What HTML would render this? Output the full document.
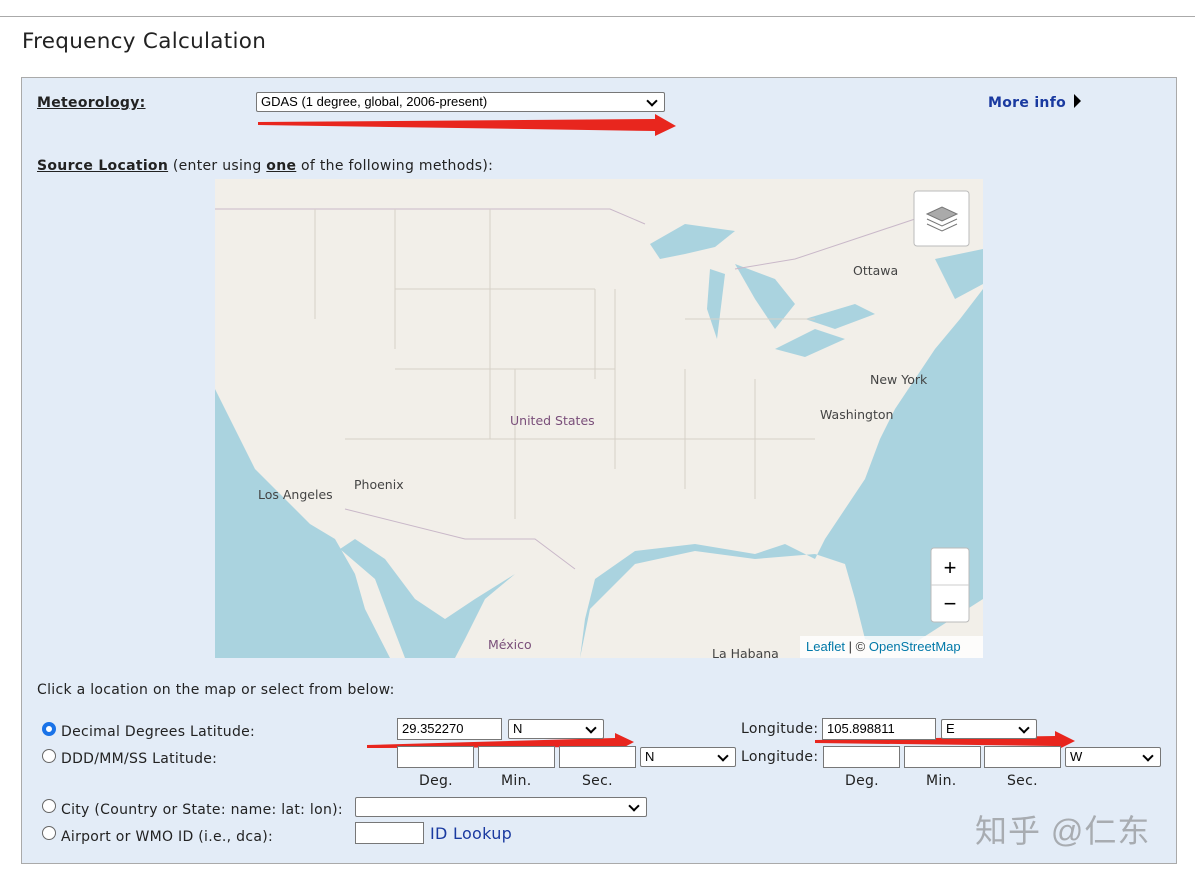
<!DOCTYPE html>
<html><head><meta charset="utf-8"><style>
*{box-sizing:border-box}
body{margin:0;width:1195px;height:876px;background:#fff;font-family:"DejaVu Sans","Liberation Sans",sans-serif;font-size:14px;color:#222;position:relative;overflow:hidden}
.a{position:absolute}
.inp{position:absolute;background:#fff;border:1px solid #777;height:22px;font-family:"Liberation Sans",sans-serif;font-size:13px;padding:2px 4px;color:#000}
.sel{position:absolute;background:#fff;border:1px solid #777;border-radius:2px;height:20px;font-family:"Liberation Sans",sans-serif;font-size:13px;padding:1px 4px;color:#000}
.sel:after{content:"";position:absolute;right:8px;top:4px;width:6px;height:6px;border-right:2px solid #000;border-bottom:2px solid #000;transform:rotate(45deg)}
.rad{position:absolute;width:14px;height:14px;border-radius:50%;border:1px solid #666;background:#fff}
.lab{position:absolute;font-size:14px;color:#222;white-space:nowrap;letter-spacing:0.3px}
</style></head><body>
<div class="a" style="left:0;top:16px;width:1195px;height:1px;background:#aaa"></div>
<div class="a" style="left:22px;top:29px;font-size:21.5px;color:#222;letter-spacing:0.3px">Frequency Calculation</div>
<div class="a" style="left:21px;top:77px;width:1156px;height:787px;background:#e3ecf7;border:1px solid #aaa"></div>
<div class="lab" style="left:37px;top:95px;font-weight:bold;text-decoration:underline">Meteorology:</div>
<div class="sel" style="left:256px;top:92px;width:409px;height:20px">GDAS (1 degree, global, 2006-present)</div>
<div class="lab" style="left:988px;top:95px;font-weight:bold;color:#1a3aa0">More info</div>
<div class="a" style="left:1074px;top:94px;width:0;height:0;border-left:7px solid #000;border-top:7px solid transparent;border-bottom:7px solid transparent"></div>
<svg class="a" style="left:0;top:0" width="1195" height="876"><polygon points="258,122 655,119 655,114 676,126 655,136 655,131 258,125" fill="#e8261e"/><polygon points="367,745 615,738 615,733 634,742 615,752 615,747 367,748" fill="#e8261e"/><polygon points="815,740 1055,736 1055,731 1075,741 1055,751 1055,746 815,743" fill="#e8261e"/></svg>
<div class="lab" style="left:37px;top:158px"><b style="text-decoration:underline">Source Location</b> (enter using <b style="text-decoration:underline">one</b> of the following methods):</div>
<svg class="a" style="left:215px;top:179px" width="768" height="479" viewBox="0 0 768 479">
<rect width="768" height="479" fill="#f2efe9"/>
<path d="M0,210 L20,250 L40,290 L70,320 L95,345 L120,360 L140,395 L150,430 L175,479 L0,479Z" fill="#aad3df"/>
<path d="M125,370 L160,400 L175,440 L190,479 L240,479 L250,460 L270,420 L300,395 L260,420 L230,440 L200,420 L170,380 L140,360Z" fill="#aad3df"/>
<path d="M365,479 L375,430 L420,385 L480,372 L540,380 L600,375 L630,385 L640,420 L650,460 L690,470 L768,420 L768,110 L745,140 L720,170 L700,200 L680,230 L665,260 L650,300 L630,330 L610,360 L600,380 L570,365 L540,375 L480,365 L420,372 L380,400 L370,440Z" fill="#aad3df"/>
<path d="M720,80 L768,70 L768,105 L740,120Z" fill="#aad3df"/>
<path d="M435,65 L470,45 L520,52 L500,68 L470,75 L445,80Z" fill="#aad3df"/>
<path d="M495,90 L510,95 L502,160 L492,130Z" fill="#aad3df"/>
<path d="M520,85 L560,100 L580,125 L560,150 L540,120Z" fill="#aad3df"/>
<path d="M560,170 L600,150 L630,160 L590,178Z" fill="#aad3df"/>
<path d="M590,140 L640,125 L660,135 L620,150Z" fill="#aad3df"/>
<g stroke="#c9b8c9" fill="none" stroke-width="1"><path d="M0,30 L395,30 L430,45"/><path d="M130,330 L250,360 L320,360 L360,390"/><path d="M520,90 L580,80 L640,60 L700,40"/></g>
<g stroke="#d6d0c8" fill="none" stroke-width="1"><path d="M100,30 V140 M180,30 V170 M275,30 V260 M180,110 H380 M180,190 H400 M130,260 H400 M300,190 V340 M400,110 V290 M470,190 V310 M540,200 V320 M380,110 V200 M400,260 H600 M470,140 H600"/></g>
<g font-family="DejaVu Sans,sans-serif" font-size="12.5" fill="#444"><text x="638" y="96">Ottawa</text><text x="655" y="205">New York</text><text x="605" y="240">Washington</text><text x="295" y="246" fill="#7a4f7a">United States</text><text x="139" y="310">Phoenix</text><text x="43" y="320">Los Angeles</text><text x="273" y="470" fill="#7a4f7a">México</text><text x="497" y="479">La Habana</text></g>
<rect x="699" y="12" width="55" height="55" rx="3" fill="#fff" stroke="#bbb"/>
<g fill="none" stroke="#777"><path d="M712,45 L727,52 L742,45"/><path d="M712,40 L727,47 L742,40"/><path d="M712,35 L727,28 L742,35 L727,42Z" fill="#aaa"/></g>
<rect x="716" y="369" width="38" height="74" rx="3" fill="#fff" stroke="#bbb"/><line x1="716" y1="406" x2="754" y2="406" stroke="#ccc"/>
<text x="735" y="396" text-anchor="middle" font-size="22" font-family="Liberation Sans" fill="#000">+</text><text x="735" y="432" text-anchor="middle" font-size="22" font-family="Liberation Sans" fill="#000">−</text>
<rect x="585" y="457" width="183" height="22" fill="rgba(255,255,255,.8)"/>
<text x="591" y="472" font-size="13" font-family="Liberation Sans" fill="#0078a8">Leaflet <tspan fill="#333">| ©</tspan> OpenStreetMap</text>
</svg>
<div class="lab" style="left:37px;top:682px">Click a location on the map or select from below:</div>
<div class="rad" style="left:42px;top:722px;border:4px solid #1a73e8"></div>
<div class="lab" style="left:61px;top:724px">Decimal Degrees Latitude:</div>
<div class="inp" style="left:397px;top:718px;width:105px">29.352270</div>
<div class="sel" style="left:508px;top:719px;width:96px">N</div>
<div class="lab" style="left:741px;top:721px">Longitude:</div>
<div class="inp" style="left:822px;top:718px;width:114px">105.898811</div>
<div class="sel" style="left:941px;top:719px;width:96px">E</div>
<div class="rad" style="left:42px;top:749px"></div>
<div class="lab" style="left:61px;top:751px">DDD/MM/SS Latitude:</div>
<div class="inp" style="left:397px;top:746px;width:77px"></div><div class="inp" style="left:478px;top:746px;width:77px"></div><div class="inp" style="left:559px;top:746px;width:77px"></div>
<div class="sel" style="left:640px;top:747px;width:96px">N</div>
<div class="lab" style="left:741px;top:749px">Longitude:</div>
<div class="inp" style="left:823px;top:746px;width:77px"></div><div class="inp" style="left:904px;top:746px;width:77px"></div><div class="inp" style="left:984px;top:746px;width:77px"></div>
<div class="sel" style="left:1065px;top:747px;width:96px">W</div>
<div class="lab" style="left:419px;top:773px">Deg.</div><div class="lab" style="left:501px;top:773px">Min.</div><div class="lab" style="left:582px;top:773px">Sec.</div>
<div class="lab" style="left:845px;top:773px">Deg.</div><div class="lab" style="left:926px;top:773px">Min.</div><div class="lab" style="left:1007px;top:773px">Sec.</div>
<div class="rad" style="left:42px;top:799px"></div>
<div class="lab" style="left:61px;top:802px">City (Country or State: name: lat: lon):</div>
<div class="sel" style="left:355px;top:797px;width:292px"></div>
<div class="rad" style="left:42px;top:826px"></div>
<div class="lab" style="left:61px;top:829px">Airport or WMO ID (i.e., dca):</div>
<div class="inp" style="left:355px;top:822px;width:69px"></div>
<div class="lab" style="left:430px;top:824px;font-size:16px;color:#1a3aa0">ID Lookup</div>
<div class="lab" style="left:975px;top:806px;font-size:32px;letter-spacing:1px;color:rgba(120,120,120,.55);font-family:'Liberation Sans','Noto Sans CJK SC',sans-serif">知乎 @仁东</div>
</body></html>
